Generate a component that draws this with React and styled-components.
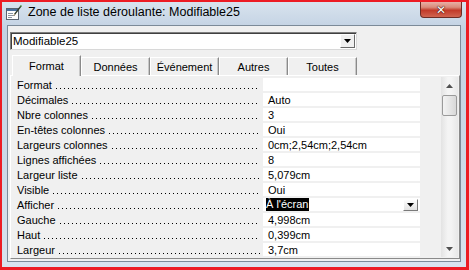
import React from "react";
import styled, { createGlobalStyle } from "styled-components";

const GlobalStyle = createGlobalStyle`
  html, body {
    margin: 0;
    padding: 0;
    background: #ffffff;
  }
  body {
    font-family: "Liberation Sans", Arial, sans-serif;
    font-size: 11px;
    color: #000;
  }
`;

const rows = [
  { label: "Format", value: "" },
  { label: "Décimales", value: "Auto" },
  { label: "Nbre colonnes", value: "3" },
  { label: "En-têtes colonnes", value: "Oui" },
  { label: "Largeurs colonnes", value: "0cm;2,54cm;2,54cm" },
  { label: "Lignes affichées", value: "8" },
  { label: "Largeur liste", value: "5,079cm" },
  { label: "Visible", value: "Oui" },
  { label: "Afficher", value: "À l'écran", selected: true },
  { label: "Gauche", value: "4,998cm" },
  { label: "Haut", value: "0,399cm" },
  { label: "Largeur", value: "3,7cm" },
];

const tabs = ["Format", "Données", "Événement", "Autres", "Toutes"];

const FormIcon = () => (
  <svg width="16" height="16" viewBox="0 0 16 16">
    <rect x="0.5" y="4.5" width="12" height="11" fill="#fdfdfd" stroke="#5a6470" />
    <rect x="1" y="5" width="11" height="2" fill="#4a6f9c" />
    <rect x="2" y="9" width="5" height="1" fill="#8a949e" />
    <rect x="2" y="11" width="7" height="1" fill="#8a949e" />
    <rect x="2" y="13" width="4" height="1" fill="#8a949e" />
    <path d="M8 10 L14.5 1.5 L15.5 2.5 L9 11 Z" fill="#2e3b2a" />
    <path d="M8 10 L7.5 12 L9 11 Z" fill="#c8a060" />
    <path d="M14 2 L15 1 L16 2 L15 3 Z" fill="#4f9a3c" />
  </svg>
);

const Arrow = ({ down, color = "#222", size = 4 }) => (
  <svg width={size * 2 + 1} height={size + 1} viewBox={`0 0 ${size * 2 + 1} ${size + 1}`}>
    {down ? (
      <path d={`M0 0 H${size * 2 + 1} L${size + 0.5} ${size + 1} Z`} fill={color} />
    ) : (
      <path d={`M0 ${size + 1} H${size * 2 + 1} L${size + 0.5} 0 Z`} fill={color} />
    )}
  </svg>
);

export default function App() {
  return (
    <>
      <GlobalStyle />
      <Outline>
        <Window>
          <TitleBar>
            <IconSlot>
              <FormIcon />
            </IconSlot>
            <Title>Zone de liste déroulante: Modifiable25</Title>
            <CloseButton>
              <CloseGlyph>✕</CloseGlyph>
            </CloseButton>
          </TitleBar>

          <Client>
            <Combo>
              <ComboText>Modifiable25</ComboText>
              <ComboButton>
                <Arrow down size={3} color="#000" />
              </ComboButton>
            </Combo>

            <TabStrip>
              {tabs.map((t, i) => (
                <Tab key={t} active={i === 0}>
                  {t}
                </Tab>
              ))}
            </TabStrip>

            <Panel>
              <Grid>
                {rows.map((r) => (
                  <Row key={r.label}>
                    <LabelCell>
                      <span>{r.label}</span>
                      <Leader />
                    </LabelCell>
                    <ValueCell>
                      {r.selected ? <Selected>{r.value}</Selected> : r.value}
                      {r.selected && (
                        <CellButton>
                          <Arrow down size={3} color="#000" />
                        </CellButton>
                      )}
                    </ValueCell>
                    <Filler />
                  </Row>
                ))}
              </Grid>
              <ScrollBar>
                <ScrollArrow>
                  <Arrow size={3} color="#505050" />
                </ScrollArrow>
                <Thumb />
                <Track />
                <ScrollArrow>
                  <Arrow down size={3} color="#505050" />
                </ScrollArrow>
              </ScrollBar>
            </Panel>
          </Client>
        </Window>
      </Outline>
    </>
  );
}

const Outline = styled.div`
  width: 469px;
  height: 270px;
  box-sizing: border-box;
  border: 2px solid #ec1c24;
  border-right-width: 3px;
  border-bottom-width: 3px;
`;

const Window = styled.div`
  height: 100%;
  box-sizing: border-box;
  display: flex;
  flex-direction: column;
  padding: 0 5px 5px 5px;
  background: linear-gradient(180deg, #d8e3ee 0%, #c3d2e3 10%, #ccd9e7 60%, #d9e3ee 100%);
`;

const TitleBar = styled.div`
  height: 23px;
  display: flex;
  align-items: flex-start;
  flex-shrink: 0;
`;

const IconSlot = styled.div`
  width: 16px;
  height: 16px;
  margin: 2px 0 0 -1px;
`;

const Title = styled.div`
  margin: 3px 0 0 6px;
  font-family: "Liberation Sans", Arial, sans-serif;
  font-size: 12.5px;
  color: #000;
  white-space: nowrap;
`;

const CloseButton = styled.div`
  margin-left: auto;
  margin-right: -1px;
  width: 42px;
  height: 16px;
  box-sizing: border-box;
  border: 1px solid #6e2c24;
  border-top: none;
  border-radius: 0 0 4px 4px;
  background: linear-gradient(180deg, #e8b0a6 0%, #d98b7b 35%, #c23a29 55%, #d06450 100%);
  display: flex;
  align-items: center;
  justify-content: center;
`;

const CloseGlyph = styled.span`
  font-family: "DejaVu Sans", sans-serif;
  font-size: 12px;
  font-weight: bold;
  line-height: 1;
  color: #fff;
  text-shadow: 0 0 1px #4a140e, 0 0 1px #4a140e, 0 0 1px #4a140e;
`;

const Client = styled.div`
  flex: 1;
  display: flex;
  flex-direction: column;
  background: #f0f0f0;
  border: 1px solid #7c8a98;
  padding: 6px 0 1px 2px;
`;

const Combo = styled.div`
  width: 347px;
  height: 18px;
  box-sizing: border-box;
  display: flex;
  align-items: center;
  background: #fff;
  border: 1px solid #7f7f7f;
  border-right-color: #d8d8d8;
  border-bottom-color: #d8d8d8;
  box-shadow: inset 1px 1px 0 #404040;
`;

const ComboText = styled.span`
  flex: 1;
  padding-left: 2px;
  font-size: 11.5px;
`;

const ComboButton = styled.div`
  width: 15px;
  height: 14px;
  margin-right: 1px;
  box-sizing: border-box;
  display: flex;
  align-items: center;
  justify-content: center;
  background: #f0f0f0;
  border: 1px solid;
  border-color: #fff #6a6a6a #6a6a6a #fff;
`;

const TabStrip = styled.div`
  display: flex;
  align-items: flex-end;
  height: 20px;
  margin-top: 5px;
  padding-left: 2px;
  position: relative;
  z-index: 1;
`;

const Tab = styled.div`
  width: 69px;
  height: ${({ active }) => (active ? "21px" : "18px")};
  margin-bottom: ${({ active }) => (active ? "-1px" : "0")};
  box-sizing: border-box;
  display: flex;
  align-items: center;
  justify-content: center;
  padding-top: ${({ active }) => (active ? "0" : "1px")};
  background: #f0f0f0;
  border-top: 1px solid #fff;
  border-left: 1px solid #fff;
  border-right: 1px solid #8a8a8a;
  box-shadow: inset -1px 0 0 #c8c8c8;
  font-size: 11px;
  color: #000;
  white-space: nowrap;
`;

const Panel = styled.div`
  width: 450px;
  box-sizing: border-box;
  display: flex;
  padding: 1px;
  border-top: 1px solid #fff;
  border-left: 1px solid #fff;
  border-right: 1px solid #8a8a8a;
  border-bottom: 1px solid #8a8a8a;
`;

const Grid = styled.div`
  width: 428px;
  display: flex;
  flex-direction: column;
  background: #f0f0f0;
`;

const Row = styled.div`
  height: 15px;
  display: grid;
  grid-template-columns: 251px 157px 20px;
`;

const LabelCell = styled.div`
  display: flex;
  align-items: center;
  padding: 0 3px 0 5px;
  overflow: hidden;
  white-space: nowrap;
`;

const Leader = styled.span`
  flex: 1;
  align-self: stretch;
  margin-left: 4px;
  background-image: linear-gradient(90deg, #000 1px, transparent 1px);
  background-size: 4px 1px;
  background-repeat: repeat-x;
  background-position: 0 calc(100% - 3px);
`;

const ValueCell = styled.div`
  display: flex;
  align-items: center;
  background: #fff;
  margin: 1px 0;
  padding-left: 5px;
  white-space: nowrap;
`;

const Selected = styled.span`
  background: #000;
  color: #fff;
  padding: 0 1px 0 0;
  margin-left: -2px;
  line-height: 13px;
`;

const CellButton = styled.div`
  margin-left: auto;
  margin-right: 2px;
  width: 15px;
  height: 12px;
  box-sizing: border-box;
  display: flex;
  align-items: center;
  justify-content: center;
  background: linear-gradient(180deg, #fdfdfd, #e2e2e2);
  border: 1px solid;
  border-color: #fff #7a7a7a #7a7a7a #fff;
`;

const Filler = styled.div``;

const ScrollBar = styled.div`
  width: 17px;
  margin-left: 1px;
  display: flex;
  flex-direction: column;
  background: linear-gradient(90deg, #e3e3e3, #f4f4f4 40%, #f4f4f4 60%, #e8e8e8);
`;

const ScrollArrow = styled.div`
  height: 17px;
  display: flex;
  align-items: center;
  justify-content: center;
`;

const Thumb = styled.div`
  height: 21px;
  margin: 1px 1px 0 1px;
  box-sizing: border-box;
  border: 1px solid #9a9a9a;
  border-radius: 2px;
  background: linear-gradient(90deg, #f3f3f3, #e6e6e6 50%, #d8d8d8);
`;

const Track = styled.div`
  flex: 1;
`;
